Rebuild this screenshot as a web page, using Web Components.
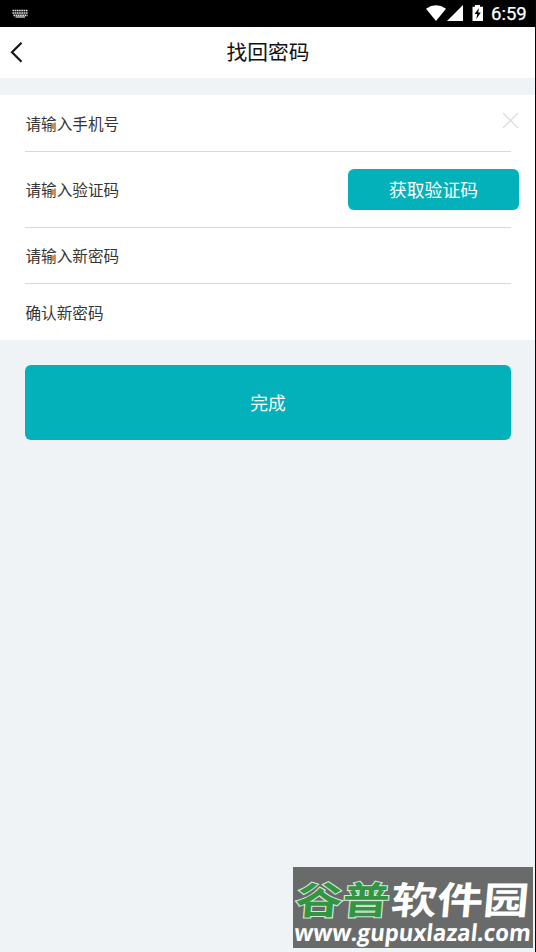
<!DOCTYPE html>
<html lang="zh-CN"><head><meta charset="utf-8"><title>找回密码</title>
<style>html,body{margin:0;height:100%;overflow:hidden}body{font-family:"Noto Sans CJK SC",sans-serif}</style></head>
<body><reset-page></reset-page>
<script>
function define(name, html){
  const t=document.createElement('template');t.innerHTML=html;
  customElements.define(name,class extends HTMLElement{
    constructor(){super();this.attachShadow({mode:'open'}).append(t.content.cloneNode(true));}
  });
}
define('status-bar',`<style>:host{display:flex;height:27px;background:#000;color:#fff;box-sizing:border-box}
svg{display:block;flex:none}.icons{margin-left:auto}.time{font:400 18.500px/28px Roboto,sans-serif;width:44px;margin-left:7px;-webkit-text-stroke:.25px #fff}</style>
<svg width="40" height="27" viewBox="0 0 40 27"><path d="M12.500 10.500h15.500M12.500 13h15.500M13.500 15.300h14" stroke="#ddd" stroke-width="1.700" stroke-dasharray="1.700 .5"/><path d="M15.500 17h9.500" stroke="#bbb" stroke-width="1.500"/></svg>
<svg class="icons" width="60" height="27" viewBox="424 0 60 27"><path fill="#fff" d="M426 8.700Q436 2 446 8.700L436 21zM463 5v16h-16zM475 5h5v1.700h3V21h-10.500V6.700h2.500z"/><path fill="#000" d="M479 8l-4.500 6h2.700l-.8 5 4.400-6.500h-2.600z"/></svg>
<div class="time">6:59</div>`);
define('nav-bar',`<style>:host{display:grid;grid-template-columns:40px 1fr 40px;height:51px;background:#fff;color:#111;align-items:center}
.t{text-align:center;font-size:20.700px;line-height:49px;padding:0 0 2px 1px}svg{display:block}</style>
<svg width="40" height="51" viewBox="0 27 40 51"><path d="M21.500 42.700L12 52.300l9.500 9.500" fill="none" stroke="#171717" stroke-width="2.200"/></svg><div class="t"><slot></slot></div>`);
define('form-row',`<style>:host{display:flex;height:56px;padding-right:16px;margin-left:25px;align-items:center;justify-content:space-between;font-size:15.600px;color:#353535;box-sizing:border-box;line-height:24px;background:linear-gradient(#d6d8d9,#d6d8d9) 0 100%/486px 1px no-repeat}
:host([last]){background:none}span{padding:0 0 var(--text-lift,1px) .5px}</style><span><slot></slot></span><slot name="end"></slot>`);
define('clear-icon',`<style>:host{display:block;margin-bottom:6px}svg{display:block}</style><svg width="17" height="17"><path d="M1 1l15 15M16 1L1 16" stroke="#dedede" stroke-width="1.300"/></svg>`);
define('action-button',`<style>:host{display:block}button{display:block;width:100%;height:100%;border:0;border-radius:6px;padding:0 0 var(--lift,0);background:#02b1b9;color:#fff;font:inherit;font-size:17.800px;line-height:26px}</style><button><slot></slot></button>`);
define('site-mark',`<style>:host{display:block}svg{display:block;overflow:visible}</style>
<svg width="240" height="81" viewBox="293.500 867 240 81"><rect x="293.500" y="867" width="240" height="81" fill="#696b6b"/>
<g font-family="Noto Sans CJK SC,sans-serif" font-weight="700" font-size="46">
<text transform="translate(295 913.500) skewX(-5) scale(1 .82)" textLength="94" lengthAdjust="spacingAndGlyphs" fill="#329541" stroke="#d5e7d6" stroke-width="2.500" paint-order="stroke">谷普</text>
<text transform="translate(390.500 913.500) skewX(-5) scale(1 .82)" textLength="138" lengthAdjust="spacingAndGlyphs" fill="#fff">软件园</text></g>
<text transform="translate(294 940.500) skewX(-6)" font-family="Open Sans,sans-serif" font-size="23.500" font-weight="700" fill="#fff" textLength="236.500" lengthAdjust="spacingAndGlyphs">www.gupuxlazal.com</text></svg>`);
define('reset-page',`<style>:host{display:flex;flex-direction:column;height:952px;width:536px;background:#eff3f5;border-right:1px solid #080808;box-sizing:border-box}
.form{margin-top:17px;background:#fff;height:245px}.r1{height:57px}.r2{height:76px}.r2,.r3{--text-lift:3px}.get{width:171px;height:41px;margin-bottom:2px}.done{width:486px;height:75px;margin:25px 0 0 25px;--lift:2px}
site-mark{margin:auto 2px 4px auto}</style>
<status-bar></status-bar><nav-bar>找回密码</nav-bar>
<div class="form"><form-row class="r1">请输入手机号<clear-icon slot="end"></clear-icon></form-row>
<form-row class="r2">请输入验证码<action-button class="get" slot="end">获取验证码</action-button></form-row>
<form-row class="r3">请输入新密码</form-row><form-row last>确认新密码</form-row></div>
<action-button class="done">完成</action-button><site-mark></site-mark>`);
</script></body></html>
